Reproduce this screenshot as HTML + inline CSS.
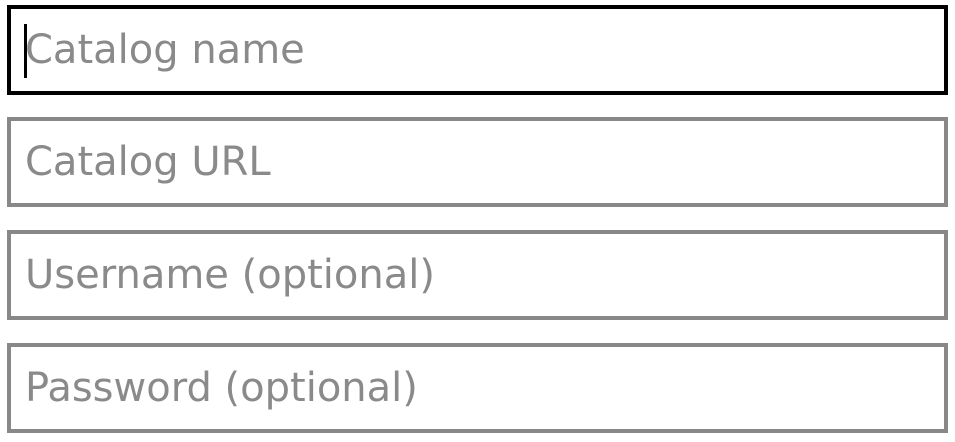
<!DOCTYPE html>
<html><head><style>
body{margin:0;width:955px;height:442px;background:#fff;position:relative;overflow:hidden;font-family:"DejaVu Sans","Liberation Sans",sans-serif;}
.b{position:absolute;left:7px;width:933px;height:82px;border:4px solid #888;box-sizing:content-box;}
.b span{position:absolute;left:14px;top:17px;font-size:40px;color:#8a8a8a;line-height:48px;}
.f{border-color:#000;}
.c{position:absolute;left:13px;top:15px;width:3px;height:54px;background:#000;}
</style></head><body>
<div class="b f" style="top:5px"><div class="c"></div><span>Catalog name</span></div>
<div class="b" style="top:117px"><span>Catalog URL</span></div>
<div class="b" style="top:230px"><span>Username (optional)</span></div>
<div class="b" style="top:343px"><span>Password (optional)</span></div>
</body></html>
